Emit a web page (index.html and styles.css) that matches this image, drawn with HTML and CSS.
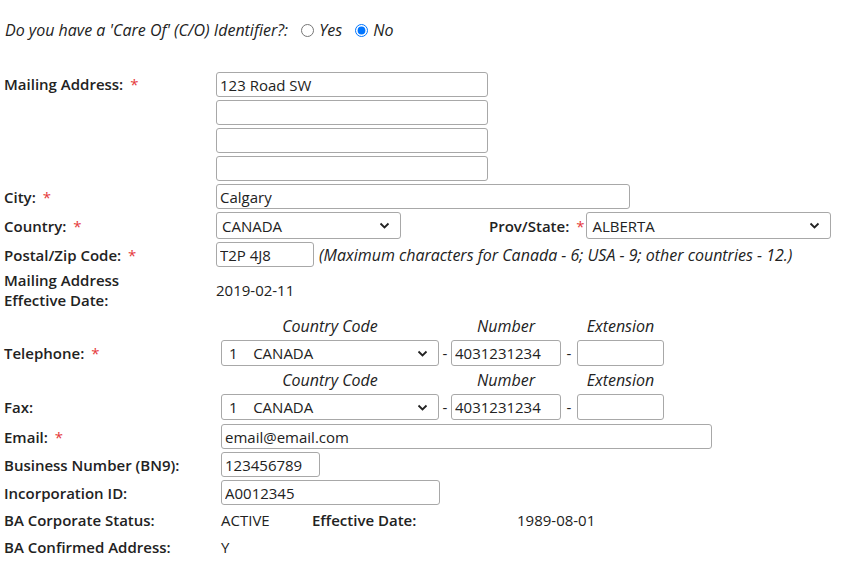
FILE: index.html
```html
<!DOCTYPE html>
<html lang="en">
<head>
    <meta charset="UTF-8">
    <meta name="viewport" content="width=device-width, initial-scale=1.0">
    <title>Mailing Address</title>
    <link rel="stylesheet" href="styles.css">
</head>
<body>
    <form class="profile" id="profileForm">
        <p class="care-of">Do you have a 'Care Of' (C/O) Identifier?:
            <label class="opt"><input type="radio" name="careOf" value="Y">Yes</label>
            <label class="opt"><input type="radio" name="careOf" value="N" checked>No</label>
        </p>

        <div class="address">
            <div class="row top">
                <label class="lbl">Mailing Address: <span class="req">*</span></label>
                <div class="stack">
                    <input type="text" class="addr" value="123 Road SW">
                    <input type="text" class="addr">
                    <input type="text" class="addr">
                    <input type="text" class="addr">
                </div>
            </div>

            <div class="row">
                <label class="lbl" for="city">City: <span class="req">*</span></label>
                <input type="text" id="city" class="city" value="Calgary">
            </div>

            <div class="row">
                <label class="lbl" for="country">Country: <span class="req">*</span></label>
                <select id="country" class="country">
                    <option>CANADA</option>
                    <option>USA</option>
                </select>
                <label class="lbl prov" for="prov">Prov/State: <span class="req">*</span></label>
                <select id="prov" class="prov-select">
                    <option>ALBERTA</option>
                    <option>BRITISH COLUMBIA</option>
                </select>
            </div>

            <div class="row">
                <label class="lbl" for="postal">Postal/Zip Code: <span class="req">*</span></label>
                <input type="text" id="postal" class="postal" value="T2P 4J8">
                <span class="note">(Maximum characters for Canada - 6; USA - 9; other countries - 12.)</span>
            </div>

            <div class="row">
                <span class="lbl">Mailing Address<br>Effective Date:</span>
                <span class="value">2019-02-11</span>
            </div>
        </div>

        <div class="phones">
            <span></span>
            <span class="head">Country Code</span>
            <span></span>
            <span class="head">Number</span>
            <span></span>
            <span class="head">Extension</span>

            <label class="lbl">Telephone: <span class="req">*</span></label>
            <select class="code">
                <option>1&nbsp;&nbsp;&nbsp;&nbsp;CANADA</option>
            </select>
            <span class="dash">-</span>
            <input type="text" value="4031231234">
            <span class="dash">-</span>
            <input type="text">

            <span></span>
            <span class="head">Country Code</span>
            <span></span>
            <span class="head">Number</span>
            <span></span>
            <span class="head">Extension</span>

            <label class="lbl">Fax:</label>
            <select class="code">
                <option>1&nbsp;&nbsp;&nbsp;&nbsp;CANADA</option>
            </select>
            <span class="dash">-</span>
            <input type="text" value="4031231234">
            <span class="dash">-</span>
            <input type="text">
        </div>

        <div class="contact">
            <div class="row">
                <label class="lbl" for="email">Email: <span class="req">*</span></label>
                <input type="text" id="email" class="email" value="email@email.com">
            </div>
            <div class="row">
                <label class="lbl" for="bn">Business Number (BN9):</label>
                <input type="text" id="bn" class="bn" value="123456789">
            </div>
            <div class="row">
                <label class="lbl" for="incorp">Incorporation ID:</label>
                <input type="text" id="incorp" class="incorp" value="A0012345">
            </div>
            <div class="row text">
                <span class="lbl">BA Corporate Status:</span>
                <span class="status">ACTIVE</span>
                <span class="lbl eff">Effective Date:</span>
                <span class="value">1989-08-01</span>
            </div>
            <div class="row text">
                <span class="lbl">BA Confirmed Address:</span>
                <span class="value">Y</span>
            </div>
        </div>
    </form>
</body>
</html>
```

FILE: styles.css
```css
* {
    margin: 0;
    padding: 0;
    box-sizing: border-box;
}

body {
    font-family: "Open Sans", "Liberation Sans", sans-serif;
    font-size: 15px;
    color: #222;
    background: #fff;
    padding: 0 4px;
}

.care-of {
    font-style: italic;
    font-size: 16px;
    line-height: 22px;
    margin-top: 19px;
    padding-left: 1px;
}

.opt input {
    margin: 0 5px 0 9px;
    vertical-align: -1px;
}

.address {
    margin-top: 31px;
}

.row {
    display: flex;
    align-items: center;
    margin-bottom: 3px;
}

.row.top {
    align-items: flex-start;
}

.row.top .lbl {
    line-height: 25px;
}

.lbl {
    width: 212px;
    flex-shrink: 0;
    font-weight: 600;
    line-height: 20px;
}

.req {
    color: #e5383b;
    font-weight: 400;
    margin-left: 3px;
}

input[type="text"], select {
    font: inherit;
    color: #222;
    height: 25px;
    border: 1px solid #a8a8a8;
    border-radius: 3px;
    background: #fff;
    padding: 0 3px;
}

select {
    appearance: none;
    height: 27px;
    padding: 0 28px 0 5px;
    background: #fff url("data:image/svg+xml,%3Csvg xmlns='http://www.w3.org/2000/svg' width='11' height='7' viewBox='0 0 11 7'%3E%3Cpath d='M1.5 1.5l4 4 4-4' fill='none' stroke='%23222' stroke-width='1.8'/%3E%3C/svg%3E") no-repeat right 10px center;
}

.stack {
    display: flex;
    flex-direction: column;
    gap: 3px;
}

.addr {
    width: 272px;
}

.city {
    width: 414px;
}

.country {
    width: 185px;
}

.lbl.prov {
    width: auto;
    margin-left: 88px;
    margin-right: 2px;
}

.prov-select {
    width: 245px;
    padding-left: 5px;
}

.postal {
    width: 98px;
}

.note {
    font-style: italic;
    font-size: 16px;
    margin-left: 5px;
}

.phones {
    display: grid;
    grid-template-columns: 217px 218px 12px 110px 16px 87px;
    row-gap: 3px;
    align-items: center;
    margin-top: 5px;
}

.head {
    font-style: italic;
    font-size: 16px;
    line-height: 22px;
    text-align: center;
}

.phones input, .phones select {
    width: 100%;
    height: 26px;
}

.phones .code {
    padding-left: 7px;
}

.dash {
    text-align: center;
}

.contact {
    margin-top: 4px;
}

.contact .lbl {
    width: 217px;
}

.email {
    width: 491px;
}

.bn {
    width: 99px;
}

.incorp {
    width: 219px;
}

.row.text {
    margin: 0;
    height: 27px;
}

.contact .row:nth-child(3) {
    margin-bottom: 1px;
}

.status {
    width: 91px;
}

.contact .lbl.eff {
    width: 205px;
}
```
